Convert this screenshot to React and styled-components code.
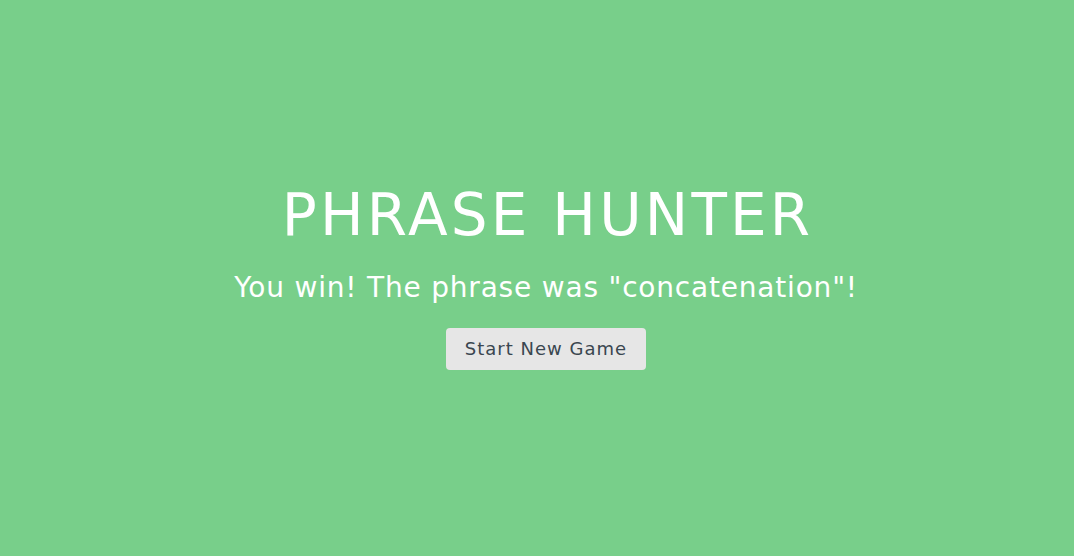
import React from "react";
import styled, { createGlobalStyle } from "styled-components";

const GlobalStyle = createGlobalStyle`
  html, body {
    margin: 0;
    padding: 0;
    height: 100%;
  }
  body {
    background: #78cf8a;
    font-family: "DejaVu Sans", "Open Sans", sans-serif;
  }
`;

const Overlay = styled.div`
  height: 556px;
  box-sizing: border-box;
  padding-left: 18px;
  display: flex;
  flex-direction: column;
  align-items: center;
  justify-content: center;
  background: #78cf8a;
  color: #fff;
  text-align: center;
`;

const Title = styled.h2`
  margin: 0;
  font-size: 58px;
  font-weight: 400;
  line-height: 1;
  letter-spacing: 3.2px;
  text-indent: 3.2px;
`;

const Message = styled.h1`
  margin: 27px 0 0;
  font-size: 28px;
  font-weight: 400;
  line-height: 1.2;
  letter-spacing: 0.8px;
`;

const Button = styled.button`
  margin-top: 23px;
  width: 200px;
  height: 42px;
  border: none;
  border-radius: 4px;
  background: #e6e6e6;
  color: #3a4650;
  font-family: inherit;
  font-size: 18px;
  letter-spacing: 1px;
  cursor: pointer;
`;

const App = () => {
  return (
    <>
      <GlobalStyle />
      <Overlay>
        <Title>PHRASE HUNTER</Title>
        <Message>You win! The phrase was "concatenation"!</Message>
        <Button>Start New Game</Button>
      </Overlay>
    </>
  );
};

export default App;
